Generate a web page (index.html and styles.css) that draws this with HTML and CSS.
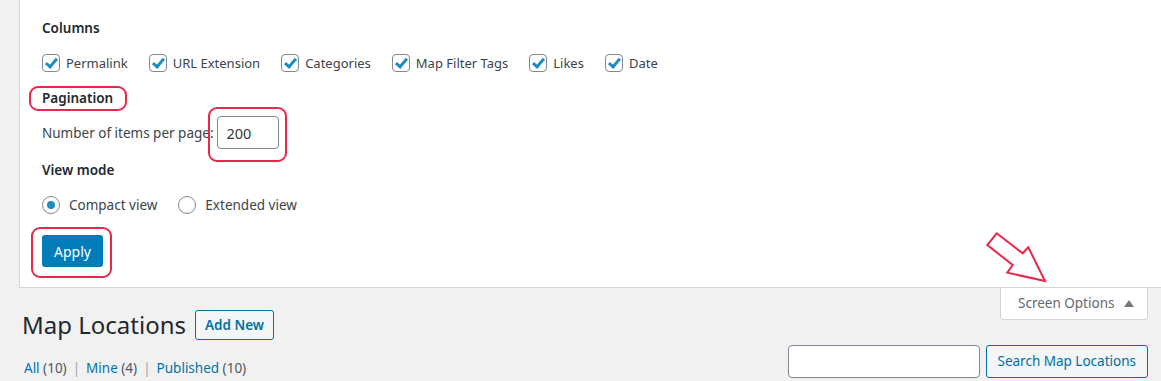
FILE: index.html
```html
<!DOCTYPE html>
<html>
<head>
  <title>Map Locations</title>
  <link rel="stylesheet" href="styles.css">
</head>
<body>
  <div class="screen-meta">
    <form class="screen-options">
      <fieldset class="columns">
        <legend>Columns</legend>
        <div class="check-row">
          <label class="check"><span class="box"></span>Permalink</label>
          <label class="check"><span class="box"></span>URL Extension</label>
          <label class="check"><span class="box"></span>Categories</label>
          <label class="check"><span class="box"></span>Map Filter Tags</label>
          <label class="check"><span class="box"></span>Likes</label>
          <label class="check"><span class="box"></span>Date</label>
        </div>
      </fieldset>

      <fieldset class="pagination">
        <legend>Pagination</legend>
        <label class="per-page">Number of items per page: <input type="text" value="200"></label>
      </fieldset>

      <fieldset class="view-mode">
        <legend>View mode</legend>
        <div class="radio-row">
          <label class="radio"><span class="dot on"></span>Compact view</label>
          <label class="radio"><span class="dot"></span>Extended view</label>
        </div>
      </fieldset>

      <button type="button" class="btn-primary">Apply</button>
    </form>

    <!-- annotations -->
    <span class="mark mark-pagination"></span>
    <span class="mark mark-input"></span>
    <span class="mark mark-apply"></span>
    <svg class="arrow" width="62" height="54" viewBox="0 0 62 54">
      <polygon points="10.7,2.3 36.7,22.3 42.3,16.3 59,50 21.3,41.7 26.7,34 1.3,14" fill="#fff" stroke="#e8284a" stroke-width="2"/>
    </svg>
  </div>

  <div class="wrap">
    <div class="screen-tab">Screen Options <span class="tri"></span></div>
    <div class="title-row">
      <h1>Map Locations</h1>
      <a class="btn-outline add-new">Add New</a>
    </div>
    <div class="list-bar">
      <ul class="subsubsub">
        <li><a>All <span class="count">(10)</span></a><span class="sep">|</span></li>
        <li><a>Mine <span class="count">(4)</span></a><span class="sep">|</span></li>
        <li><a>Published <span class="count">(10)</span></a></li>
      </ul>
      <div class="search-box">
        <input type="search">
        <a class="btn-outline">Search Map Locations</a>
      </div>
    </div>
  </div>
</body>
</html>
```

FILE: styles.css
```css
body {
  margin: 0;
  background: #f1f1f1;
  font-family: "Noto Sans", "Open Sans", sans-serif;
  font-size: 13.5px;
  color: #3c434a;
  overflow: hidden;
}

.screen-meta {
  position: relative;
  margin-left: 19px;
  width: 1127px;
  background: #fff;
  border: 1px solid #d4d4d4;
  border-top: none;
  padding: 16px 0 20px 22px;
}

fieldset {
  border: none;
  margin: 0;
  padding: 0;
}

legend {
  padding: 0;
  font-weight: 600;
  line-height: 24px;
  color: #23282d;
}

.columns legend {
  margin-bottom: 11px;
}

.check-row, .radio-row {
  display: flex;
  gap: 21px;
}

.check-row {
  margin-bottom: 11px;
}

.check, .radio {
  display: flex;
  align-items: center;
  line-height: 24px;
}

.check {
  font-size: 13px;
}

.box {
  width: 16px;
  height: 16px;
  border: 1px solid #7e8993;
  border-radius: 4px;
  margin-right: 6px;
  position: relative;
}

.box::after {
  content: "";
  position: absolute;
  left: 5px;
  top: 1px;
  width: 4px;
  height: 9px;
  border: solid #1e8cbe;
  border-width: 0 3px 3px 0;
  transform: rotate(40deg);
}

.pagination legend {
  margin-bottom: 6px;
}

.per-page {
  display: flex;
  align-items: center;
}

.per-page input {
  width: 62px;
  height: 33px;
  box-sizing: border-box;
  margin-left: 3px;
  padding: 0 9px;
  border: 1px solid #7e8993;
  border-radius: 4px;
  font: inherit;
  font-size: 14.5px;
  color: #32373c;
}

.view-mode {
  margin-top: 9px;
}

.view-mode legend {
  margin-bottom: 11px;
}

.dot {
  width: 16px;
  height: 16px;
  border: 1px solid #7e8993;
  border-radius: 50%;
  margin-right: 9px;
  position: relative;
}

.dot.on::after {
  content: "";
  position: absolute;
  left: 4px;
  top: 4px;
  width: 8px;
  height: 8px;
  border-radius: 50%;
  background: #1e8cbe;
}

.btn-primary {
  display: block;
  margin-top: 18px;
  height: 32px;
  padding: 0 12px;
  border: none;
  border-radius: 3px;
  background: #007cba;
  color: #fff;
  font: inherit;
  font-size: 14px;
}

.mark {
  position: absolute;
  border: 2px solid #e8284a;
  border-radius: 9px;
}

.mark-pagination {
  left: 9px;
  top: 86px;
  width: 94px;
  height: 21px;
}

.mark-input {
  left: 188px;
  top: 107px;
  width: 75px;
  height: 51px;
}

.mark-apply {
  left: 11px;
  top: 227px;
  width: 77px;
  height: 47px;
}

.arrow {
  position: absolute;
  left: 966px;
  top: 231px;
  overflow: visible;
}

.wrap {
  position: relative;
  padding: 0 13px 0 22px;
}

.screen-tab {
  position: absolute;
  right: 13px;
  top: 0;
  width: 148px;
  height: 32px;
  box-sizing: border-box;
  padding-left: 17px;
  background: #fff;
  border: 1px solid #d4d4d4;
  border-top: none;
  border-radius: 0 0 4px 4px;
  line-height: 31px;
  color: #646970;
  font-size: 13.5px;
}

.tri {
  display: inline-block;
  margin-left: 6px;
  border-left: 5px solid transparent;
  border-right: 5px solid transparent;
  border-bottom: 7px solid #72777c;
  vertical-align: 1px;
}

.title-row {
  display: flex;
  align-items: center;
  padding-top: 22px;
}

h1 {
  margin: 0;
  font-size: 24px;
  font-weight: 400;
  color: #23282d;
  line-height: 30px;
}

.btn-outline {
  display: inline-block;
  box-sizing: border-box;
  height: 30px;
  padding: 0 9px;
  border: 1px solid #0071a1;
  border-radius: 3px;
  background: #f3f5f6;
  color: #0071a1;
  line-height: 28px;
  font-size: 13.5px;
}

.add-new {
  margin-left: 9px;
  font-weight: 600;
}

.list-bar {
  display: flex;
  justify-content: space-between;
  align-items: center;
  margin-top: 5px;
}

.subsubsub {
  list-style: none;
  margin: 12px 0 0 2px;
  padding: 0;
  display: flex;
  color: #a0a5aa;
}

.subsubsub .sep {
  margin: 0 6px 0 6px;
}

.subsubsub a {
  color: #0073aa;
}

.subsubsub .count {
  color: #50575e;
}

.search-box {
  display: flex;
  gap: 6px;
}

.search-box input {
  width: 192px;
  height: 33px;
  box-sizing: border-box;
  border: 1px solid #7e8993;
  border-radius: 4px;
}

.search-box .btn-outline {
  height: 33px;
  line-height: 31px;
  padding: 0 11px;
  font-weight: 400;
}
```
